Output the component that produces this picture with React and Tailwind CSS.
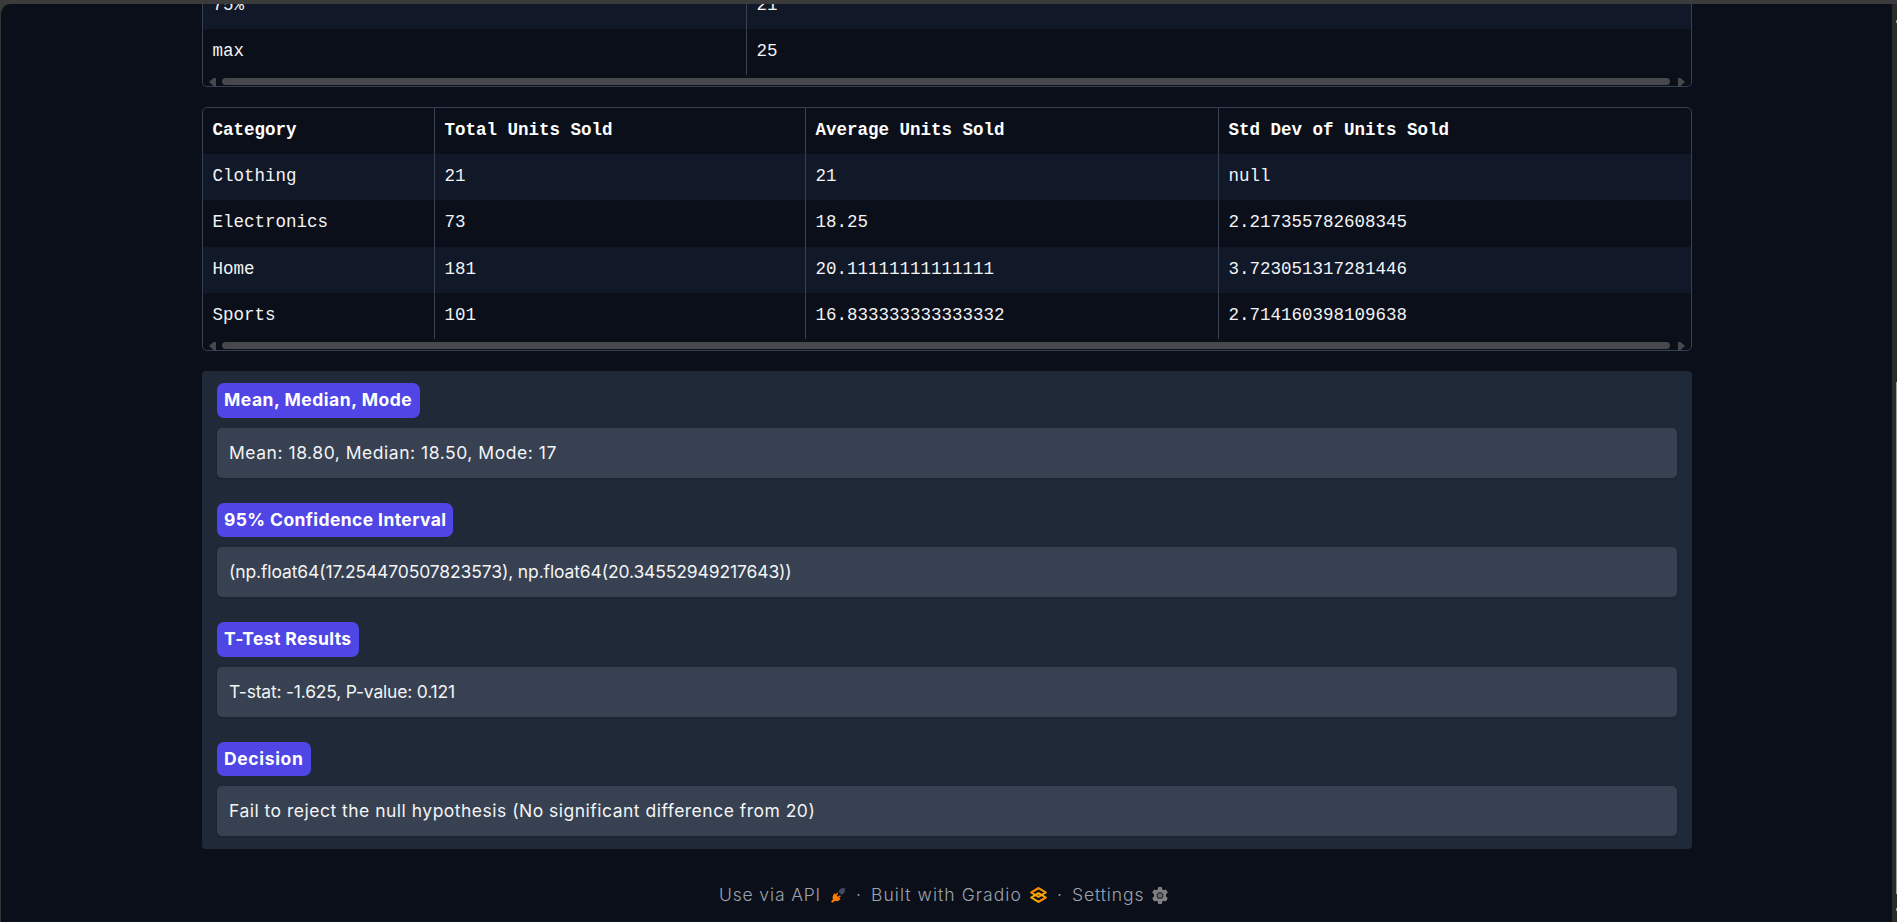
const columns = "grid grid-cols-[232px_371px_413px_1fr]";

const rows = [
  ["Clothing", "21", "21", "null"],
  ["Electronics", "73", "18.25", "2.217355782608345"],
  ["Home", "181", "20.11111111111111", "3.723051317281446"],
  ["Sports", "101", "16.833333333333332", "2.714160398109638"],
];

const rowHeights = ["h-[46px]", "h-[47px]", "h-[46px]", "h-[46px]"];

const results = [
  {
    label: "Mean, Median, Mode",
    value: "Mean: 18.80, Median: 18.50, Mode: 17",
    labelClass: "w-[203px] h-[35px] mb-[10px] tracking-[0.52px]",
    valueClass: "mb-[25px] tracking-[0.53px]",
  },
  {
    label: "95% Confidence Interval",
    value: "(np.float64(17.254470507823573), np.float64(20.34552949217643))",
    labelClass: "w-[236px] h-[34px] mb-[10px] tracking-[0.4px]",
    valueClass: "mb-[25px] tracking-[-0.13px]",
  },
  {
    label: "T-Test Results",
    value: "T-stat: -1.625, P-value: 0.121",
    labelClass: "w-[142px] h-[35px] mb-[10px] tracking-[0.38px]",
    valueClass: "mb-[25px] tracking-[-0.2px]",
  },
  {
    label: "Decision",
    value: "Fail to reject the null hypothesis (No significant difference from 20)",
    labelClass: "w-[94px] h-[34px] mb-[10px] tracking-[0.65px]",
    valueClass: "tracking-[0.49px]",
  },
];

function Cell({ children, last, bold }) {
  return (
    <div
      className={`flex items-center pb-[2px] pl-[9.5px] ${last ? "" : "border-r border-[#374151]"} ${
        bold ? "font-bold text-white" : ""
      }`}
    >
      {children}
    </div>
  );
}

function HorizontalScrollbar() {
  return (
    <div className="flex h-[11px] items-start pt-[3px] pl-[6px] pr-[6px]">
      <svg className="h-2 w-[7px] shrink-0" viewBox="0 0 7 8">
        <path d="M7 0v8H4.5L0 4 4.5 0z" fill="#47484b" />
      </svg>
      <div className="mr-[8px] ml-[6px] h-[7px] grow rounded-full bg-[#47484b]" />
      <svg className="h-2 w-[7px] shrink-0" viewBox="0 0 7 8">
        <path d="M0 0v8h2.5L7 4 2.500 0z" fill="#47484b" />
      </svg>
    </div>
  );
}

function PlugIcon() {
  return (
    <svg className="h-4 w-[15px]" viewBox="0 0 15 16">
      <path d="M7.2 4.2 9.4 2q1.9-1.7 3.5-.4L14.2.4l.6.6-1.2 1.3q1.2 1.7-.4 3.4L10.900 8z" fill="#414b5e" />
      <path
        d="M3.5 6.2 4.8 7.4 6.3 5.6l1 1-1.6 1.8 1.5 1.4 1.7-1.6 1 1-1.7 1.6 1.3 1.3-1.3 1.2q-2 1.7-3.9.5L1.2 15.8 0 14.6l1.9-2q-1.2-2.2.5-4.9z"
        fill="#ff7c00"
      />
    </svg>
  );
}

function GradioIcon() {
  return (
    <svg className="h-4 w-[17px]" viewBox="0 0 17 16" fill="none" strokeLinejoin="round">
      <path d="M8.5 1.200 15.800 5.500 8.500 9.800 1.200 5.500z" stroke="#ff9a00" strokeWidth="2" />
      <path d="M8.500 6.200 15.800 10.500 8.500 14.800 1.200 10.500z" stroke="#ffb000" strokeWidth="2" />
      <path d="M1.200 5.500 8.500 1.200M8.500 14.800l7.300-4.300" stroke="#ff8400" strokeWidth="2" />
    </svg>
  );
}

function GearIcon() {
  return (
    <svg className="h-[17px] w-4" viewBox="0 0 16 17">
      <path
        d="M6.200 0h3.600l.5 2.400 1.300.8 2.300-.8L15.800 5.600 14 7.300v2.300l1.800 1.700-1.900 3.200-2.300-.8-1.300.8-.5 2.500H6.200l-.5-2.500-1.300-.8-2.300.8L.2 11.300 2 9.600V7.300L.2 5.600l1.900-3.200 2.300.8 1.300-.8z"
        fill="#808080"
      />
      <circle cx="8" cy="8.500" r="2.900" fill="#66676a" stroke="#33363d" strokeWidth="1.200" />
    </svg>
  );
}

export default function App() {
  return (
    <div className="h-[922px] w-[1897px] overflow-hidden bg-[#3b3b3b] pt-1 font-['Inter',sans-serif]">
      <div className="flex h-[918px]">
        <div className="h-full w-[1892px] shrink-0 overflow-hidden rounded-tl-[10px] border-l border-[#333333] bg-[#0b0f19] pl-[201px]">
          <main className="w-[1490px]">
            <section className="h-[83px] rounded-b-[5px] border border-t-0 border-[#374151] font-['Liberation_Mono',monospace] text-[17.5px] text-[#f3f4f6]">
              <div className="flex h-[25px] flex-col justify-end overflow-hidden bg-[#111827]">
                <div className="grid h-[46px] shrink-0 grid-cols-[544px_1fr]">
                  <Cell>75%</Cell>
                  <Cell last>21</Cell>
                </div>
              </div>
              <div className="grid h-[46px] grid-cols-[544px_1fr]">
                <Cell>max</Cell>
                <Cell last>25</Cell>
              </div>
              <HorizontalScrollbar />
            </section>

            <section className="mt-5 h-[244px] rounded-[5px] border border-[#374151] font-['Liberation_Mono',monospace] text-[17.5px] text-[#f3f4f6]">
              <div className={`${columns} h-[46px]`}>
                <Cell bold>Category</Cell>
                <Cell bold>Total Units Sold</Cell>
                <Cell bold>Average Units Sold</Cell>
                <Cell bold last>Std Dev of Units Sold</Cell>
              </div>
              {rows.map((row, i) => (
                <div key={row[0]} className={`${columns} ${rowHeights[i]} ${i % 2 === 0 ? "bg-[#111827]" : ""}`}>
                  {row.map((value, j) => (
                    <Cell key={j} last={j === 3}>
                      {value}
                    </Cell>
                  ))}
                </div>
              ))}
              <HorizontalScrollbar />
            </section>

            <section className="mt-5 h-[478px] rounded-[4px] bg-[#1f2937] px-[15px] pt-3">
              {results.map((item) => (
                <div key={item.label}>
                  <div
                    className={`flex items-center rounded-[7px] bg-[#4f46e5] pl-[7px] text-[17.5px] font-bold whitespace-nowrap text-white ${item.labelClass}`}
                  >
                    {item.label}
                  </div>
                  <div
                    className={`flex h-[50px] items-center rounded-[5px] bg-[#374151] pl-[12px] text-[17.5px] whitespace-nowrap text-[#f3f4f6] shadow-sm ${item.valueClass}`}
                  >
                    {item.value}
                  </div>
                </div>
              ))}
            </section>

            <footer className="mt-[34px] flex h-6 items-center pl-[517px] text-[17.5px] font-light whitespace-nowrap text-[#9ca3af]">
              <a className="flex w-[127px] items-center justify-between tracking-[0.85px]">
                Use via API
                <PlugIcon />
              </a>
              <span className="w-[25px] pl-[10px]">·</span>
              <a className="flex w-[176px] items-center justify-between tracking-[1.05px]">
                Built with Gradio
                <GradioIcon />
              </a>
              <span className="w-[25px] pl-[10px]">·</span>
              <a className="flex w-[96px] items-center justify-between tracking-[0.9px]">
                Settings
                <GearIcon />
              </a>
            </footer>
          </main>
        </div>
        <div className="flex w-[5px] flex-col items-end bg-[#2b2b2b]">
          <div className="mt-4 h-[3px] w-px rounded-full bg-[#9f9f9f]" />
          <div className="mt-[359px] h-[512px] w-px bg-[#9f9f9f]" />
          <div className="mt-[14px] h-[3px] w-px bg-[#9f9f9f]" />
        </div>
      </div>
    </div>
  );
}
